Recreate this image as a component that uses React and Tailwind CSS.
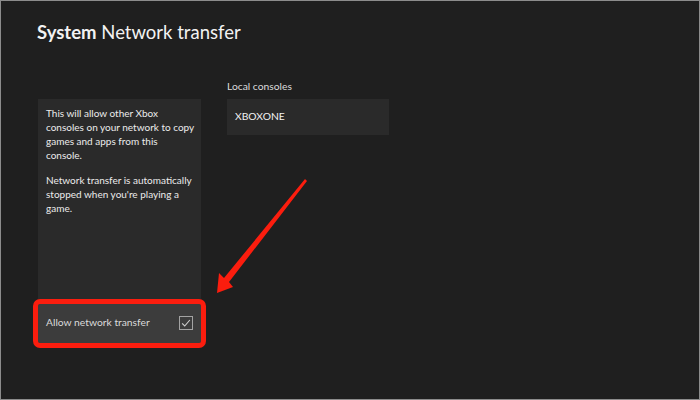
import React from 'react';

function CheckBox() {
  return (
    <span className="flex h-[14px] w-[14px] items-center justify-center border border-[#a3a3a3]">
      <svg viewBox="0 0 14 14" className="h-[12px] w-[12px]" fill="none" stroke="#d0d0d0" strokeWidth="1.3">
        <path d="M2.5 7.5l3 3 6-7" />
      </svg>
    </span>
  );
}

export default function App() {
  return (
    <div className="relative h-[400px] w-[700px] overflow-hidden border border-[#8c8c8c] bg-[#1f1f1f] font-['Lato','Liberation_Sans',sans-serif] text-[#f2f2f2]">
      <h1 className="pl-[36px] pt-[19px] text-[18.5px] leading-[24px]">
        <span className="font-bold">System</span> Network transfer
      </h1>

      <div className="mt-[34px] flex gap-[26px] pl-[37px]">
        <div className="w-[163px] pt-[21px]">
          <div className="flex h-[244px] flex-col bg-[#2a2a2a]">
            <div className="flex-1 whitespace-nowrap px-[8px] pt-[7px] text-[10px] leading-[14px] text-[#ececec]">
              <p>
                This will allow other Xbox
                <br />
                consoles on your network to copy
                <br />
                games and apps from this
                <br />
                console.
              </p>
              <p className="mt-[11px]">
                Network transfer is automatically
                <br />
                stopped when you're playing a
                <br />
                game.
              </p>
            </div>
            <button className="flex h-[39px] items-center justify-between rounded-[2px] bg-[#3c3c3c] pb-[2px] pl-[8px] pr-[8px] text-[10.3px] text-[#dadada] outline-[5px] outline-[#fb1d0e]">
              <span>Allow network transfer</span>
              <CheckBox />
            </button>
          </div>
        </div>

        <div className="w-[162px]">
          <div className="h-[16px] text-[10.3px] leading-[16px] text-[#dcdcdc]">Local consoles</div>
          <div className="mt-[5px] flex h-[36px] items-center bg-[#2a2a2a] px-[8px] text-[10.3px] text-[#f2f2f2]">
            XBOXONE
          </div>
        </div>
      </div>

      <svg className="pointer-events-none absolute left-0 top-0 h-[400px] w-[700px]" viewBox="0 0 700 400">
        <polygon
          points="304,178 306,180 228,281 232,286 216,292 218,272 223,277"
          fill="#fb1d0e"
        />
      </svg>
    </div>
  );
}
